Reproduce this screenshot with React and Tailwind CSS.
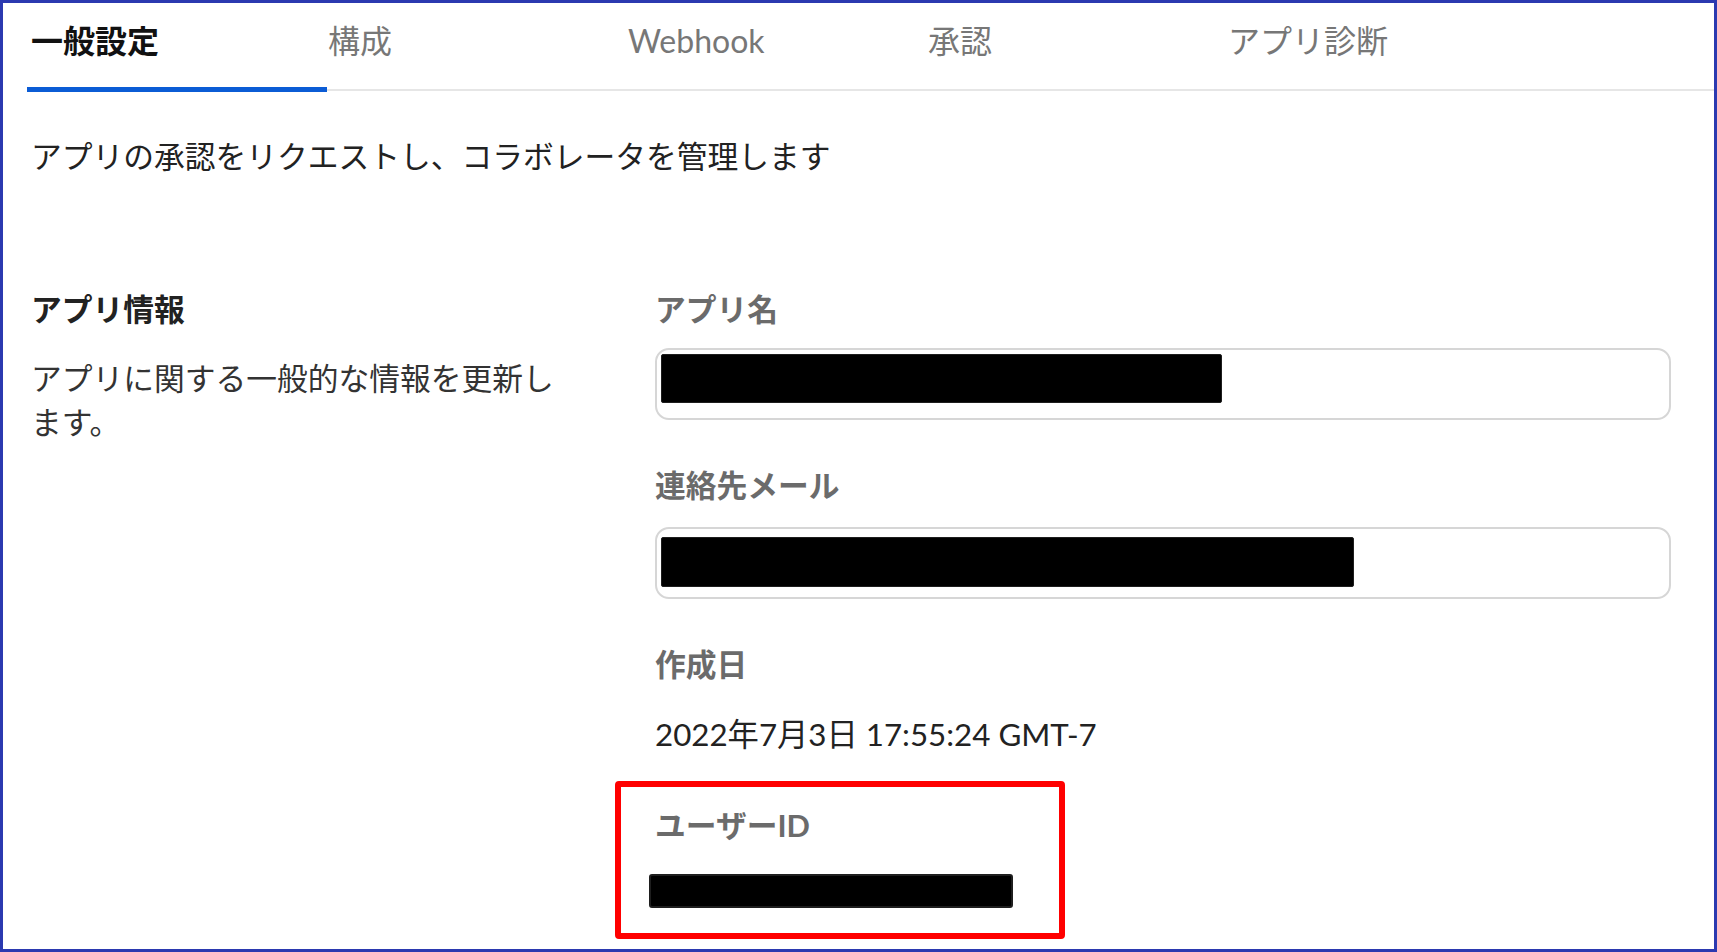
export default function App() {
  const tabs = ["一般設定", "構成", "Webhook", "承認", "アプリ診断"];
  return (
    <div className="w-[1717px] h-[952px] border-[3px] border-[#2b39b0] bg-white pl-[24px] font-['Lato','Noto_Sans_CJK_JP',sans-serif] text-[#222] overflow-hidden">
      <div className="flex items-start border-b-2 border-[#e6e6e6]">
        {tabs.map((t, i) =>
          i === 0 ? (
            <div key={t} className="w-[300px] h-[89px] mb-[-3px] border-b-[5px] border-[#0b5cd5] pl-[4px] pt-[18px] text-[32px] leading-[40px] font-bold text-[#111]">
              {t}
            </div>
          ) : (
            <div key={t} className="w-[300px] h-[86px] pl-[1px] pt-[18px] text-[32px] leading-[40px] text-[#777]">
              {t}
            </div>
          )
        )}
      </div>
      <div className="pl-[4px] pr-[43px]">
        <p className="mt-[44px] text-[30.75px] leading-[44px] text-[#222]">
          アプリの承認をリクエストし、コラボレータを管理します
        </p>
        <div className="mt-[109px] flex">
          <div className="w-[540px] shrink-0">
            <h2 className="text-[30.75px] leading-[44px] font-bold text-[#222]">アプリ情報</h2>
            <p className="mt-[25px] text-[30.75px] leading-[44px] text-[#333]">
              アプリに関する一般的な情報を更新します。
            </p>
          </div>
          <div className="ml-[84px] flex-1 flex flex-col">
            <div className="text-[30.75px] leading-[44px] font-bold text-[#6b6b6b]">アプリ名</div>
            <div className="mt-[16px] h-[72px] border-2 border-[#d6d6d6] rounded-[14px] pt-[4px] pl-[4px]">
              <div className="w-[561px] h-[49px] bg-black border border-[#1e1e1e] rounded-[2px]" />
            </div>
            <div className="mt-[44px] text-[30.75px] leading-[44px] font-bold text-[#6b6b6b]">連絡先メール</div>
            <div className="mt-[19px] h-[72px] border-2 border-[#d6d6d6] rounded-[14px] pt-[8px] pl-[4px]">
              <div className="w-[693px] h-[50px] bg-black border border-[#1e1e1e] rounded-[2px]" />
            </div>
            <div className="mt-[44px] text-[30.75px] leading-[44px] font-bold text-[#6b6b6b]">作成日</div>
            <div className="mt-[25px] text-[31.3px] leading-[44px] text-[#222]">2022年7月3日 17:55:24 GMT-7</div>
            <div className="mt-[25px] ml-[-40px] w-[450px] h-[158px] border-[6px] border-[#ff0000] rounded-[4px] pl-[34px] pt-[17px]">
              <div className="text-[30.75px] leading-[44px] font-bold text-[#6b6b6b]">ユーザーID</div>
              <div className="mt-[26px] ml-[-6px] w-[364px] h-[34px] bg-black border-2 border-[#1e1e1e] rounded-[3px]" />
            </div>
          </div>
        </div>
      </div>
    </div>
  );
}
